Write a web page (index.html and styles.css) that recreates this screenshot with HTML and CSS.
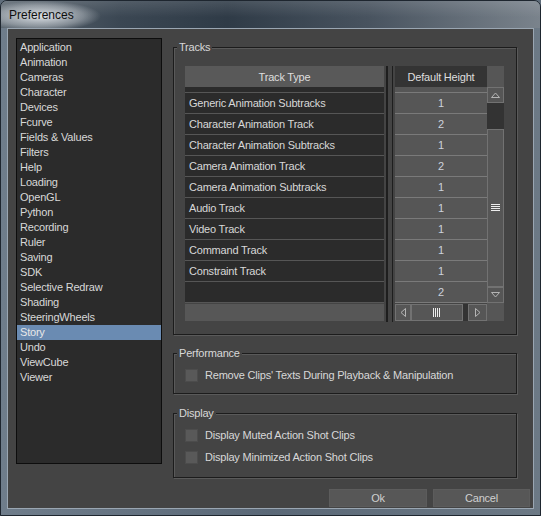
FILE: index.html
```html
<!DOCTYPE html>
<html>
<head>
<meta charset="utf-8">
<title>Preferences</title>
<link rel="stylesheet" href="styles.css">
</head>
<body>
<div class="window">
  <div class="titlebar"><span class="title">Preferences</span></div>
  <div class="client">
    <ul class="nav">
      <li>Application</li>
      <li>Animation</li>
      <li>Cameras</li>
      <li>Character</li>
      <li>Devices</li>
      <li>Fcurve</li>
      <li>Fields &amp; Values</li>
      <li>Filters</li>
      <li>Help</li>
      <li>Loading</li>
      <li>OpenGL</li>
      <li>Python</li>
      <li>Recording</li>
      <li>Ruler</li>
      <li>Saving</li>
      <li>SDK</li>
      <li>Selective Redraw</li>
      <li>Shading</li>
      <li>SteeringWheels</li>
      <li class="sel">Story</li>
      <li>Undo</li>
      <li>ViewCube</li>
      <li>Viewer</li>
    </ul>
    <div class="main">
      <fieldset class="group tracks">
        <legend>Tracks</legend>
        <div class="tables">
          <div class="tbl tleft">
            <div class="hdr">Track Type</div>
            <div class="view">
              <div class="row partial"></div>
              <div class="row">Generic Animation Subtracks</div>
              <div class="row">Character Animation Track</div>
              <div class="row">Character Animation Subtracks</div>
              <div class="row">Camera Animation Track</div>
              <div class="row">Camera Animation Subtracks</div>
              <div class="row">Audio Track</div>
              <div class="row">Video Track</div>
              <div class="row">Command Track</div>
              <div class="row">Constraint Track</div>
              <div class="row"></div>
            </div>
            <div class="hbar"></div>
          </div>
          <div class="splitter"></div>
          <div class="tbl tright">
            <div class="hdr dark">Default Height</div>
            <div class="corner"></div>
            <div class="view">
              <div class="row partial"></div>
              <div class="row">1</div>
              <div class="row">2</div>
              <div class="row">1</div>
              <div class="row">2</div>
              <div class="row">1</div>
              <div class="row">1</div>
              <div class="row">1</div>
              <div class="row">1</div>
              <div class="row">1</div>
              <div class="row">2</div>
            </div>
            <div class="vscroll">
              <div class="sbtn vbtn"><svg width="9" height="6" viewBox="0 0 9 6"><polygon points="0.5,5.5 4.5,1 8.5,5.5" fill="none" stroke="#b4b4b4" stroke-width="1"/></svg></div>
              <div class="vtrack"></div>
              <div class="thumb vthumb"><svg width="9" height="8" viewBox="0 0 9 8"><path d="M0 0.5H9M0 2.5H9M0 4.5H9M0 6.5H9" stroke="#ececec" stroke-width="1"/></svg></div>
              <div class="sbtn vbtn"><svg width="9" height="6" viewBox="0 0 9 6"><polygon points="0.5,0.5 4.5,5 8.5,0.5" fill="none" stroke="#b4b4b4" stroke-width="1"/></svg></div>
            </div>
            <div class="hscroll">
              <div class="sbtn hbtn"><svg width="6" height="9" viewBox="0 0 6 9"><polygon points="5.5,0.5 1,4.5 5.5,8.5" fill="none" stroke="#b4b4b4" stroke-width="1"/></svg></div>
              <div class="thumb hthumb"><svg width="8" height="9" viewBox="0 0 8 9"><path d="M0.5 0V9M2.5 0V9M4.5 0V9M6.5 0V9" stroke="#ececec" stroke-width="1"/></svg></div>
              <div class="htrack"></div>
              <div class="sbtn hbtn hbtn-r"><svg width="6" height="9" viewBox="0 0 6 9"><polygon points="0.5,0.5 5,4.5 0.5,8.5" fill="none" stroke="#b4b4b4" stroke-width="1"/></svg></div>
            </div>
            <div class="corner"></div>
          </div>
        </div>
      </fieldset>
      <fieldset class="group perf">
        <legend>Performance</legend>
        <label class="check"><span class="box"></span>Remove Clips' Texts During Playback &amp; Manipulation</label>
      </fieldset>
      <fieldset class="group display">
        <legend>Display</legend>
        <label class="check"><span class="box"></span>Display Muted Action Shot Clips</label>
        <label class="check"><span class="box"></span>Display Minimized Action Shot Clips</label>
      </fieldset>
      <div class="buttons">
        <button class="btn ok">Ok</button>
        <button class="btn cancel">Cancel</button>
      </div>
    </div>
  </div>
</div>
</body>
</html>
```
FILE: styles.css
```css
* { box-sizing: border-box; }
html, body { margin: 0; padding: 0; }
body {
  width: 541px;
  height: 516px;
  overflow: hidden;
  background: #5f6d7b;
  font-family: "Liberation Sans", Arial, sans-serif;
  font-size: 11px;
  letter-spacing: -0.2px;
  color: #d6d6d6;
}
.window {
  width: 541px;
  height: 516px;
  border: 1px solid #1e262f;
  border-radius: 7px 7px 0 0;
  background: linear-gradient(to right, #6f7d8b, #5a6877 50%, #6c7985);
  display: flex;
  flex-direction: column;
  overflow: hidden;
}
.titlebar {
  height: 27px;
  flex: none;
  padding-left: 8px;
  display: flex;
  align-items: center;
  background:
    radial-gradient(ellipse 60px 15px at 40px 15px, rgba(236,240,244,0.9), rgba(236,240,244,0.35) 70%, rgba(236,240,244,0)),
    linear-gradient(to bottom, rgba(255,255,255,0.12), rgba(255,255,255,0) 60%),
    linear-gradient(to right, #5e6973 0%, #3b4753 22%, #2f3b47 42%, #48535f 68%, #7a838c 100%);
}
.title { font-size: 12px; letter-spacing: 0; color: #0e0e0e; }
.client {
  margin: 0 6px;
  height: 481px;
  flex: none;
  border: 1px solid #9aa6b2;
  background: #444444;
  display: flex;
  padding: 9px 0 0 8px;
}
.nav {
  list-style: none;
  margin: 0;
  padding: 1px 0 0;
  width: 146px;
  height: 426px;
  flex: none;
  border: 1px solid #0d0d0d;
  background: #2b2b2b;
}
.nav li {
  height: 15px;
  line-height: 15px;
  padding-left: 3px;
  color: #d8d8d8;
  white-space: nowrap;
}
.nav li.sel { background: #6a8bb2; color: #e8e8e8; }
.main {
  margin-left: 11px;
  margin-top: 2px;
  width: 359px;
  display: flex;
  flex-direction: column;
}
.group {
  margin: 0 15px 0 0;
  min-width: 0;
  border: 1px solid #1c1c1c;
  box-shadow: inset 1px 1px 0 #5a5a5a, 1px 1px 0 #5a5a5a;
  padding: 12px 12px 12px 11px;
}
.group legend {
  margin-left: -8px;
  padding: 0 2px;
  line-height: 14px;
  background: #444444;
  color: #d8d8d8;
}
.perf { margin-top: 11px; padding: 8px 12px 11px 11px; }
.display { margin-top: 12px; padding: 8px 12px 13px 11px; display: flex; flex-direction: column; gap: 8px; }
.tables { display: flex; height: 256px; }
.tbl { display: grid; grid-template-rows: 21px 216px 18px; }
.tleft { width: 199px; }
.tright { width: 109px; grid-template-columns: 92px 17px; }
.hdr {
  background: #595959;
  display: flex;
  align-items: center;
  justify-content: center;
  color: #dedede;
}
.hdr.dark { background: #343434; }
.corner { background: #565656; }
.view { overflow: hidden; }
.tleft .view { background: #2b2b2b; }
.tright .view { background: #444444; }
.row {
  height: 21px;
  line-height: 21px;
  white-space: nowrap;
}
.tleft .row { border-bottom: 1px solid #565656; padding-left: 4px; color: #d8d8d8; }
.tright .row {
  background: #565656;
  border-bottom: 1px solid #7a7a7a;
  text-align: center;
  color: #ccd2dc;
}
.row.partial { height: 6px; }
.hbar { background: #575757; margin-top: 1px; }
.splitter {
  width: 11px;
  background: linear-gradient(to right, #444 0 2px, #1e1e1e 2px 4px, #444 4px 8px, #1e1e1e 8px 9px, #444 9px);
}
.vscroll { display: flex; flex-direction: column; background: #333333; }
.sbtn {
  background: #565656;
  border: 1px solid #727272;
  display: flex;
  align-items: center;
  justify-content: center;
  flex: none;
}
.vbtn { height: 16px; }
.vtrack { height: 26px; flex: none; background: #333333; }
.thumb {
  background: #565656;
  border: 1px solid #727272;
  display: flex;
  align-items: center;
  justify-content: center;
}
.vthumb { flex: 1; }
.hscroll { display: flex; background: #333333; margin-top: 1px; }
.hbtn { width: 16px; }
.hbtn-r { width: 19px; }
.hthumb { width: 52px; flex: none; }
.htrack { width: 5px; flex: none; background: #333333; }
.check {
  display: flex;
  align-items: center;
  height: 14px;
  gap: 7px;
  color: #d8d8d8;
  white-space: nowrap;
}
.box {
  width: 13px;
  height: 13px;
  flex: none;
  background: #595959;
  border: 1px solid #4c4c4c;
}
.buttons {
  margin-top: 11px;
  margin-right: 2px;
  display: flex;
  justify-content: flex-end;
  gap: 6px;
}
.btn {
  height: 18px;
  padding: 0;
  border: 1px solid #5c5c5c;
  background: #575757;
  color: #d0d0d0;
  font-family: "Liberation Sans", Arial, sans-serif;
  font-size: 11px;
  letter-spacing: -0.2px;
}
.ok { width: 98px; }
.cancel { width: 97px; }
```
